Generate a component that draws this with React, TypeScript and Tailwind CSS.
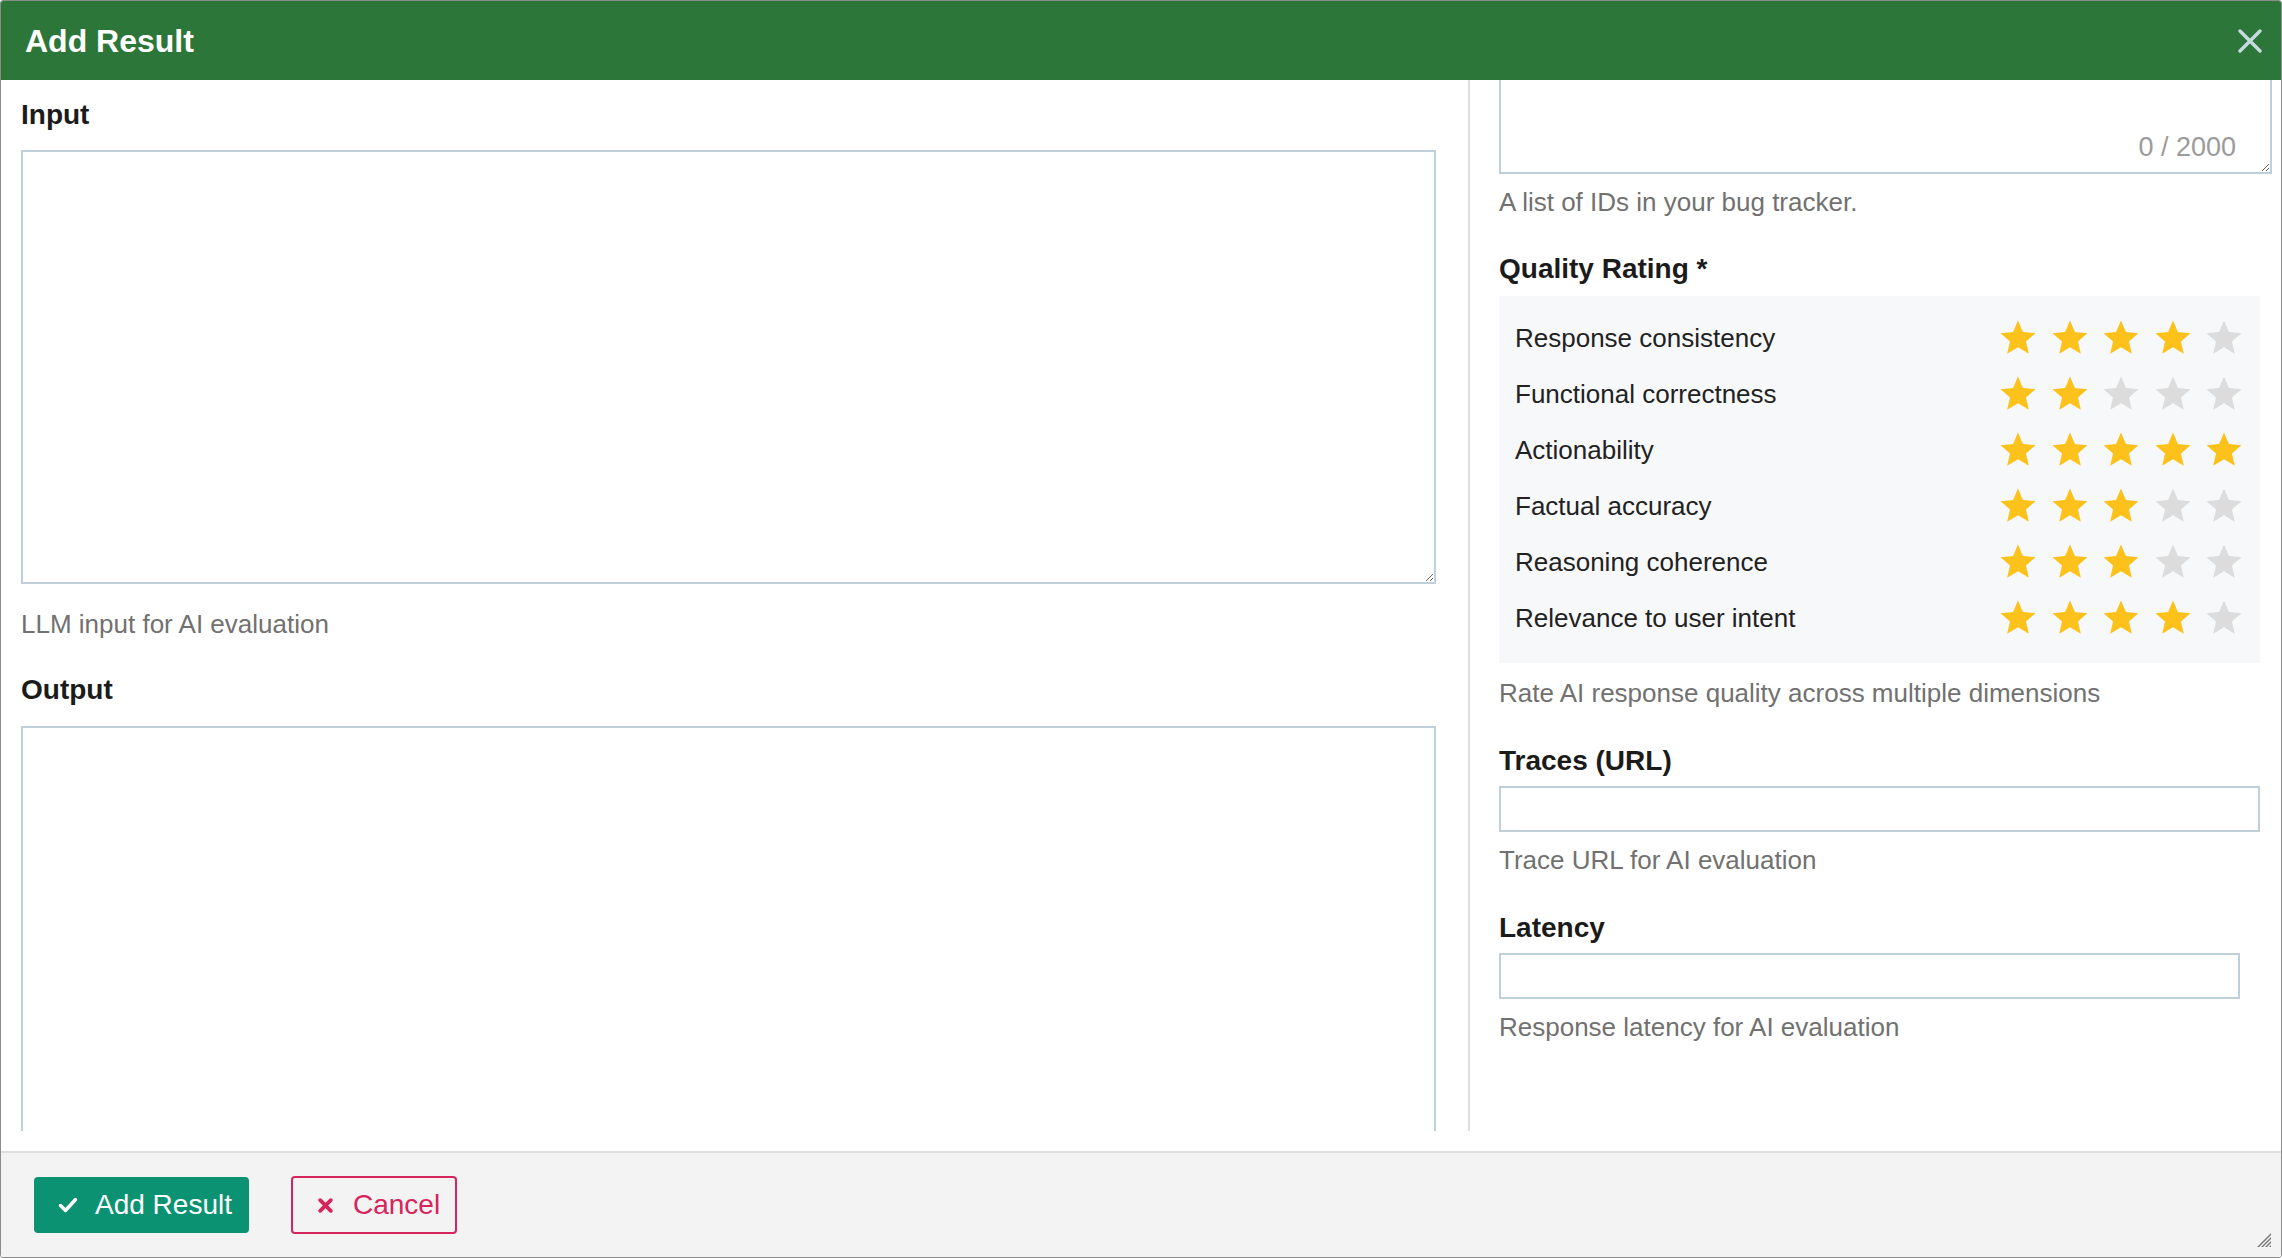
import React from 'react';

// Rating dimensions and their current scores
const ratings: [string, number][] = [
  ['Response consistency', 4],
  ['Functional correctness', 2],
  ['Actionability', 5],
  ['Factual accuracy', 3],
  ['Reasoning coherence', 3],
  ['Relevance to user intent', 4],
];

function Star({ filled }: { filled: boolean }) {
  return (
    <svg width="42" height="42" viewBox="0 0 24 24" className={filled ? 'fill-[#fcc21b]' : 'fill-[#dcdcdc]'}>
      <path d="M12 17.27L18.18 21l-1.64-7.03L22 9.24l-7.19-.61L12 2 9.19 8.63 2 9.24l5.46 4.73L5.82 21z" />
    </svg>
  );
}

function Label({ children, className = '' }: { children: React.ReactNode; className?: string }) {
  return <div className={`text-[28px] leading-[32px] font-bold text-[#1b1b1b] ${className}`}>{children}</div>;
}

function Help({ children, className = '' }: { children: React.ReactNode; className?: string }) {
  return <div className={`text-[26px] leading-[32px] text-[#717171] ${className}`}>{children}</div>;
}

export default function App() {
  return (
    <div className="w-[2282px] h-[1258px] flex flex-col border border-[#8c8c8c] rounded-[3px] overflow-hidden bg-white font-['Liberation_Sans',Arial,sans-serif]">
      {/* Header */}
      <div className="h-[79px] shrink-0 bg-[#2d763a] flex items-center justify-between pl-[24px] pr-[19px]">
        <div className="text-[32px] leading-[40px] font-bold text-white">Add Result</div>
        <svg width="24" height="24" viewBox="0 0 24 24" className="stroke-[#c6dae0]" strokeWidth="3.4" strokeLinecap="round">
          <path d="M2 2L22 22M22 2L2 22" />
        </svg>
      </div>

      {/* Body */}
      <div className="flex-1 min-h-0 pb-[20px] flex flex-col">
        <div className="flex-1 min-h-0 flex overflow-hidden">
          {/* Left column */}
          <div className="w-[1467px] shrink-0 pl-[20px] pr-[32px] pt-[19px] flex flex-col">
            <Label>Input</Label>
            <textarea className="mt-[19px] h-[434px] shrink-0 w-full border-2 border-[#bfd0db] bg-white outline-none resize" />
            <Help className="mt-[24px]">LLM input for AI evaluation</Help>
            <Label className="mt-[34px]">Output</Label>
            <textarea className="mt-[20px] h-[600px] shrink-0 w-full border-2 border-[#bfd0db] bg-white outline-none resize" />
          </div>

          {/* Divider */}
          <div className="w-[2px] shrink-0 bg-[#dedede]" />

          {/* Right column */}
          <div className="flex-1 pl-[29px] pr-[9px] flex flex-col">
            <div className="relative h-[94px] shrink-0">
              <textarea className="h-full w-full border-2 border-t-0 border-[#bfd0db] bg-white outline-none resize" />
              <span className="absolute right-[36px] bottom-[11px] text-[27px] leading-[32px] text-[#9b9b9b]">0 / 2000</span>
            </div>
            <Help className="mt-[12px]">A list of IDs in your bug tracker.</Help>
            <Label className="mt-[35px]">Quality Rating *</Label>

            <div className="mt-[11px] mr-[12px] bg-[#f7f8fa] pt-[14px] pb-[17px] pl-[16px] pr-[15px]">
              {ratings.map(([name, score]) => (
                <div key={name} className="h-[56px] flex items-center justify-between">
                  <span className="text-[26px] leading-[32px] text-[#222222]">{name}</span>
                  <div className="flex gap-[9.5px]">
                    {[1, 2, 3, 4, 5].map((i) => (
                      <Star key={i} filled={i <= score} />
                    ))}
                  </div>
                </div>
              ))}
            </div>
            <Help className="mt-[14px]">Rate AI response quality across multiple dimensions</Help>

            <Label className="mt-[36px]">Traces (URL)</Label>
            <input type="text" className="mt-[9px] mr-[12px] h-[46px] shrink-0 border-2 border-[#bfd0db] bg-white outline-none" />
            <Help className="mt-[12px]">Trace URL for AI evaluation</Help>

            <Label className="mt-[36px]">Latency</Label>
            <input type="text" className="mt-[9px] mr-[32px] h-[46px] shrink-0 border-2 border-[#bfd0db] bg-white outline-none" />
            <Help className="mt-[12px]">Response latency for AI evaluation</Help>
          </div>
        </div>
      </div>

      {/* Footer */}
      <div className="relative h-[106px] shrink-0 border-t-2 border-[#dedede] bg-[#f3f3f3] flex items-center pl-[33px] gap-[42px]">
        <button className="h-[56px] w-[215px] rounded-[4px] bg-[#0b9272] text-white flex items-center pl-[24px] gap-[17px]">
          <svg width="20" height="16" viewBox="0 0 20 16" fill="none" stroke="white" strokeWidth="3.4" strokeLinecap="round" strokeLinejoin="round">
            <path d="M2.5 8.5L7.5 13.5L17.5 2.5" />
          </svg>
          <span className="text-[28px] leading-[32px]">Add Result</span>
        </button>
        <button className="h-[58px] w-[166px] rounded-[4px] border-2 border-[#d6245c] text-[#d6245c] flex items-center pl-[24px] gap-[19px]">
          <svg width="17" height="17" viewBox="0 0 16 16" fill="none" stroke="#d6245c" strokeWidth="3.6" strokeLinecap="round">
            <path d="M3 3L13 13M13 3L3 13" />
          </svg>
          <span className="text-[28px] leading-[32px]">Cancel</span>
        </button>
        <svg width="16" height="16" viewBox="0 0 16 16" className="absolute right-[9px] bottom-[9px] fill-[#777777]">
          <path d="M15 1L1 15h2L15 3zM15 5L5 15h2L15 7zM15 9L9 15h2L15 11zM15 13L13 15h2z" />
        </svg>
      </div>
    </div>
  );
}
